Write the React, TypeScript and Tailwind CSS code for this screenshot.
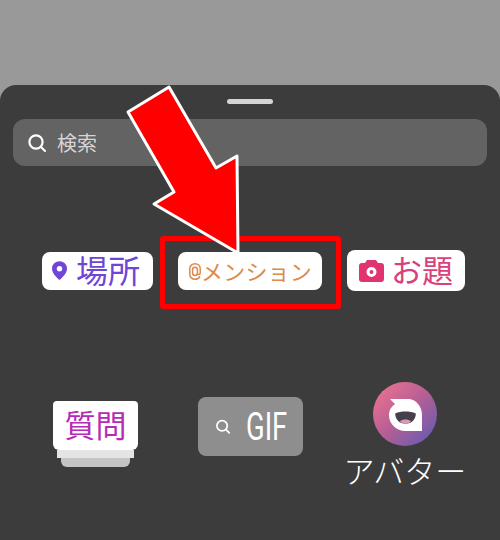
const jp = "font-['Noto_Sans_CJK_JP','Noto_Sans',sans-serif]"

function SearchIcon({ className }: { className: string }) {
  return (
    <svg viewBox="0 0 20 20" fill="none" stroke="currentColor" strokeWidth="2.2" strokeLinecap="round" className={className}>
      <circle cx="9" cy="9" r="6.6" />
      <path d="M14 14l4 4" />
    </svg>
  )
}

function PlaceSticker() {
  return (
    <div className="flex h-[38px] w-[111px] items-center rounded-lg bg-white pl-[10px]">
      <svg viewBox="0 0 16 20" className="h-[19px] w-[15px] shrink-0">
        <path fillRule="evenodd" fill="#6f45d8" d="M8 0a8 8 0 0 1 8 8c0 4.6-4.6 9-8 12C4.6 17 0 12.6 0 8a8 8 0 0 1 8-8zm0 5.2a2.9 2.9 0 1 0 0 5.800a2.9 2.9 0 0 0 0-5.800z" />
      </svg>
      <span className={`ml-[9px] pb-[4px] text-[32px] leading-none text-[#6f45d8] ${jp}`}>場所</span>
    </div>
  )
}

function MentionSticker() {
  return (
    <div className="flex h-[38px] w-[144px] items-center rounded-lg bg-white pl-[11px]">
      <svg viewBox="0 0 12 17" fill="none" stroke="#dd8a4a" strokeWidth="1.5" className="mt-[2px] h-[17px] w-[12px] shrink-0">
        <path d="M11 13.500C10 15.200 8.200 16.200 6 16.200C3 16.200 .8 14.200 .8 11.500V5.500C.8 2.800 3 .8 6 .8S11.200 2.800 11.200 5.500V10C11.200 11 10.600 11.600 9.800 11.600S8.400 11 8.400 10V6.500C8.400 5 7.300 4.200 6 4.200S3.600 5 3.600 6.500V10C3.600 11.500 4.700 12.500 6 12.500S8.400 11.500 8.400 10" />
      </svg>
      <span className={`pb-[2px] text-[22px] leading-none tracking-[0.2px] text-[#dd8a4a] ${jp}`}>メンション</span>
    </div>
  )
}

function TopicSticker() {
  return (
    <div className="flex h-[41px] w-[118px] items-center rounded-lg bg-white pl-[12px]">
      <svg viewBox="0 0 25 22" className="h-[22px] w-[25px] shrink-0">
        <path fillRule="evenodd" fill="#e0336f" d="M8 0h9l2 3h3a3 3 0 0 1 3 3v13a3 3 0 0 1-3 3H3a3 3 0 0 1-3-3V6a3 3 0 0 1 3-3h3zM12.500 7a5 5 0 1 0 0 10a5 5 0 0 0 0-10zm0 3a2 2 0 1 1 0 4a2 2 0 0 1 0-4z" />
      </svg>
      <span className={`ml-[7px] pb-[4px] text-[31px] leading-none text-[#d8417c] ${jp}`}>お題</span>
    </div>
  )
}

function QuestionSticker() {
  return (
    <div className="flex w-[85px] flex-col items-center">
      <div className={`flex h-[49px] w-[85px] items-center justify-center rounded-t-sm rounded-b-md bg-white pb-[4px] text-[31px] leading-none text-[#b52bb5] ${jp}`}>
        質問
      </div>
      <div className="h-[8px] w-[77px] bg-[#e4e4e4]" />
      <div className="h-[9px] w-[69px] rounded-b-md bg-[#c4c4c4]" />
    </div>
  )
}

function GifSticker() {
  return (
    <div className="flex h-[59px] w-[105px] items-center rounded-lg bg-[#8e8e8e] pl-[17px]">
      <SearchIcon className="h-[17px] w-[17px] text-white" />
      <span className="ml-[15px] origin-left scale-x-[0.72] text-[38px] leading-none text-white font-['Roboto',sans-serif]">GIF</span>
    </div>
  )
}

function AvatarSticker() {
  return (
    <div className="flex w-[130px] flex-col items-center">
      <div className="flex h-[64px] w-[64px] items-center justify-center rounded-full bg-[linear-gradient(135deg,#e8708f_10%,#b55f95_50%,#6a5bb0_90%)]">
        <svg viewBox="0 0 32 32" className="h-[33px] w-[33px]">
          <path fill="#fff" d="M1 1L20 1C27 2 32 9 32 16V32H16C7 32 0 25 0 17C0 12 2 8 6 6Z" />
          <path fill="#46404c" d="M6 15c6-2.500 14-2.500 20 0c0 6-4.500 10-10 10S6 21 6 15z" />
          <path fill="#d99ab8" d="M10.500 22.500c3.500-2.300 7.500-2.300 11 0c-3.500 3.300-7.500 3.300-11 0z" />
        </svg>
      </div>
      <span className={`mt-[4px] text-[31px] leading-[40px] font-light whitespace-nowrap text-white ${jp}`}>アバター</span>
    </div>
  )
}

export default function App() {
  return (
    <div className="relative flex h-[540px] w-[500px] flex-col overflow-hidden bg-[#999999]">
      <div className="mt-[85px] flex flex-1 flex-col rounded-t-2xl bg-[#3c3c3c]">
        {/* Drag handle */}
        <div className="mx-auto mt-[14px] h-[5px] w-[46px] rounded-full bg-[#d4d4d4]" />

        {/* Search */}
        <div className="mx-[13px] mt-[15px] flex h-[47px] items-center rounded-xl bg-[#636363] pl-[14px]">
          <SearchIcon className="h-[20px] w-[20px] text-white" />
          <span className={`ml-[10px] text-[20px] leading-none text-[#d6d6d6] ${jp}`}>検索</span>
        </div>

        {/* First sticker row */}
        <div className="mt-[84px] flex items-center pl-[42px]">
          <PlaceSticker />
          <div className="ml-[25px]">
            <MentionSticker />
          </div>
          <div className="ml-[25px]">
            <TopicSticker />
          </div>
        </div>

        {/* Second sticker row */}
        <div className="mt-[91px] flex items-start pl-[53px]">
          <div className="mt-[19px]">
            <QuestionSticker />
          </div>
          <div className="mt-[15px] ml-[60px]">
            <GifSticker />
          </div>
          <div className="ml-[37px]">
            <AvatarSticker />
          </div>
        </div>
      </div>

      {/* Annotation: red box and arrow drawn over the screenshot */}
      <div className="absolute top-[236px] left-[160px] h-[73px] w-[181px] rounded-[3px] border-[5px] border-[#ff0000]" />
      <svg viewBox="0 0 500 540" className="pointer-events-none absolute top-0 left-0 h-[540px] w-[500px]">
        <path
          d="M169 87L128 112L174 192L154 204L238 253L237 156L216 168Z"
          fill="#ff0000"
          stroke="#ffffff"
          strokeWidth="3"
          strokeLinejoin="round"
        />
      </svg>
    </div>
  )
}
